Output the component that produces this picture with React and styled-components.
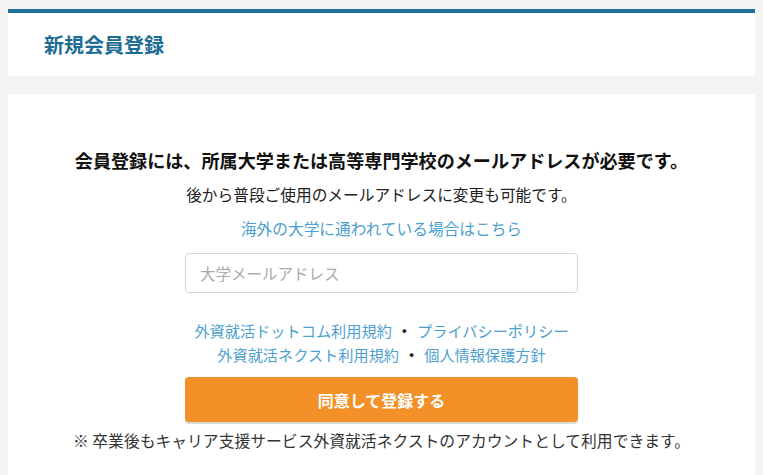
import React from "react";
import styled, { createGlobalStyle } from "styled-components";

const Global = createGlobalStyle`
  html, body {
    margin: 0;
    padding: 0;
    background: #f4f4f4;
  }
  body {
    font-family: "Noto Sans CJK JP", "Noto Sans", sans-serif;
    color: #333;
  }
`;

const Page = styled.div`
  padding: 9px 8px 0;
  display: flex;
  flex-direction: column;
  gap: 18px;
`;

const HeaderCard = styled.header`
  background: #fff;
  border-top: 4px solid #1f6f98;
  height: 63px;
  display: flex;
  align-items: center;
  padding-left: 36px;
`;

const Title = styled.h1`
  margin: 0;
  font-size: 20px;
  font-weight: 700;
  color: #1e6d95;
  line-height: 1;
`;

const Card = styled.main`
  background: #fff;
  padding: 53px 0 40px;
  display: flex;
  flex-direction: column;
  align-items: center;
`;

const Lead = styled.p`
  margin: 0;
  font-size: 18.1px;
  font-weight: 700;
  line-height: 26px;
  color: #111;
`;

const Sub = styled.p`
  margin: 10px 0 0;
  font-size: 15.7px;
  line-height: 24px;
  color: #222;
`;

const Link = styled.a`
  color: #4d9fcf;
  text-decoration: none;
  cursor: pointer;
`;

const Abroad = styled.p`
  margin: 10px 0 0;
  font-size: 15.7px;
  line-height: 24px;
`;

const Input = styled.input`
  box-sizing: border-box;
  margin-top: 12px;
  width: 393px;
  height: 40px;
  border: 1px solid #d3d6da;
  border-radius: 4px;
  padding: 0 14px;
  font-family: inherit;
  font-size: 15.5px;
  color: #333;
  outline: none;
  &::placeholder {
    color: #aaa;
  }
`;

const Terms = styled.div`
  margin-top: 25px;
  display: flex;
  flex-direction: column;
  align-items: center;
  font-size: 15.2px;
  line-height: 24px;
`;

const TermsRow = styled.div`
  display: flex;
  align-items: center;
`;

const Sep = styled.span`
  color: #222;
  font-weight: 700;
  margin: 0 5px;
`;

const Button = styled.button`
  margin-top: 11px;
  width: 393px;
  height: 45px;
  border: none;
  border-radius: 4px;
  background: #f39128;
  box-shadow: 0 2px 1px rgba(0, 0, 0, 0.15);
  color: #fff;
  font-family: inherit;
  font-size: 16px;
  font-weight: 700;
  cursor: pointer;
`;

const Note = styled.p`
  margin: 7px 0 0;
  font-size: 15.8px;
  line-height: 24px;
  color: #333;
`;

export default function App() {
  return (
    <>
      <Global />
      <Page>
        <HeaderCard>
          <Title>新規会員登録</Title>
        </HeaderCard>
        <Card>
          <Lead>会員登録には、所属大学または高等専門学校のメールアドレスが必要です。</Lead>
          <Sub>後から普段ご使用のメールアドレスに変更も可能です。</Sub>
          <Abroad>
            <Link>海外の大学に通われている場合はこちら</Link>
          </Abroad>
          <Input type="email" placeholder="大学メールアドレス" />
          <Terms>
            <TermsRow>
              <Link>外資就活ドットコム利用規約</Link>
              <Sep>・</Sep>
              <Link>プライバシーポリシー</Link>
            </TermsRow>
            <TermsRow>
              <Link>外資就活ネクスト利用規約</Link>
              <Sep>・</Sep>
              <Link>個人情報保護方針</Link>
            </TermsRow>
          </Terms>
          <Button>同意して登録する</Button>
          <Note>※ 卒業後もキャリア支援サービス外資就活ネクストのアカウントとして利用できます。</Note>
        </Card>
      </Page>
    </>
  );
}
